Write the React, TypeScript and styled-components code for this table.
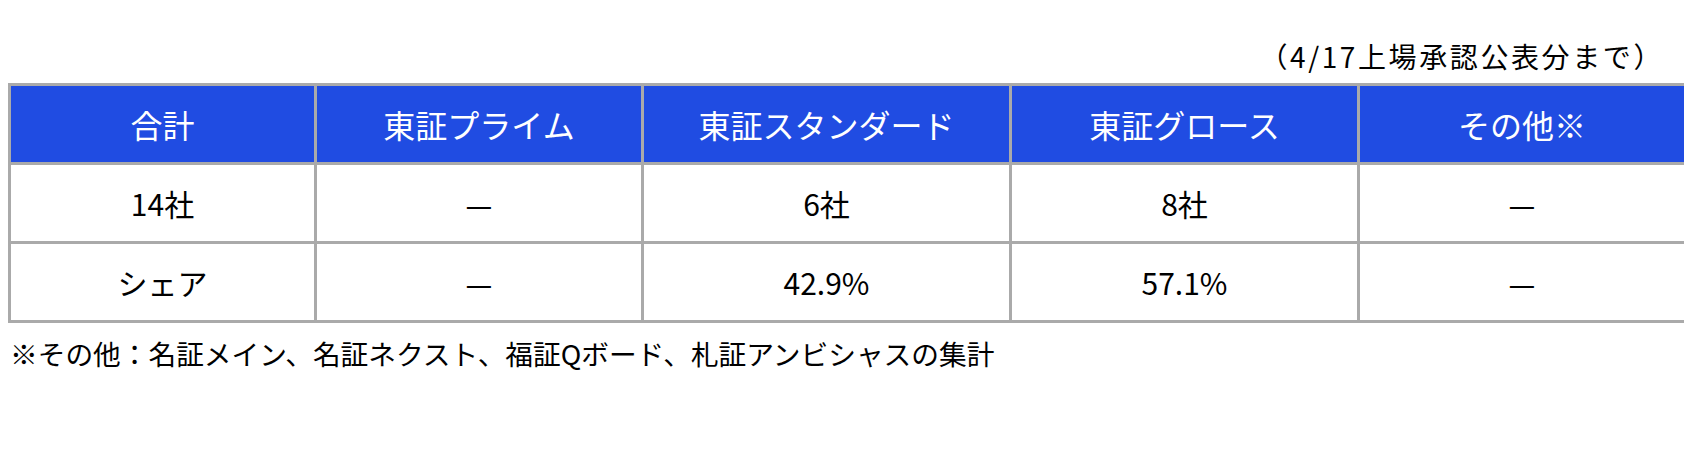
import React from "react";
import styled, { createGlobalStyle } from "styled-components";

const GlobalStyle = createGlobalStyle`
  body {
    margin: 8px;
    background: #ffffff;
    color: #000000;
    font-family: "Noto Sans CJK JP", "Noto Sans", sans-serif;
  }
`;

const Wrapper = styled.div`
  display: flex;
  flex-direction: column;
`;

const Note = styled.p`
  margin: 0 0 13px;
  padding: 34px 20px 0 0;
  text-align: right;
  font-size: 28px;
  line-height: 28px;
  letter-spacing: 2.6px;
`;

const Table = styled.table`
  width: 100%;
  border-collapse: collapse;
  table-layout: fixed;
  border: 3px solid #aaaaaa;
`;

const HeadCell = styled.th`
  height: 76px;
  padding: 0;
  border: 3px solid #aaaaaa;
  background: #204ce2;
  color: #ffffff;
  font-size: 32px;
  font-weight: 400;
  text-align: center;
  vertical-align: middle;
`;

const Cell = styled.td`
  height: 76px;
  padding: 0;
  border: 3px solid #aaaaaa;
  font-size: 30px;
  text-align: center;
  vertical-align: middle;
`;

const Footnote = styled.p`
  margin: 14px 0 0 2px;
  font-size: 27.7px;
  line-height: 1.2;
`;

const widths = [306, 327, 368, 348, 327];

const headers = ["合計", "東証プライム", "東証スタンダード", "東証グロース", "その他※"];

const rows = [
  ["14社", "—", "6社", "8社", "—"],
  ["シェア", "—", "42.9%", "57.1%", "—"],
];

export default function App() {
  return (
    <Wrapper>
      <GlobalStyle />
      <Note>（4/17上場承認公表分まで）</Note>
      <Table>
        <colgroup>
          {widths.map((w, i) => (
            <col key={i} style={{ width: w }} />
          ))}
        </colgroup>
        <thead>
          <tr>
            {headers.map((h) => (
              <HeadCell key={h}>{h}</HeadCell>
            ))}
          </tr>
        </thead>
        <tbody>
          {rows.map((r, i) => (
            <tr key={i}>
              {r.map((c, j) => (
                <Cell key={j}>{c}</Cell>
              ))}
            </tr>
          ))}
        </tbody>
      </Table>
      <Footnote>※その他：名証メイン、名証ネクスト、福証Qボード、札証アンビシャスの集計</Footnote>
    </Wrapper>
  );
}
